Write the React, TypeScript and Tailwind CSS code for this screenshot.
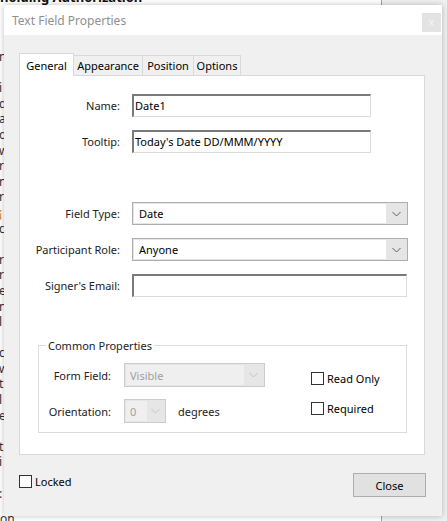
import React from 'react';

const font = "font-['Noto_Sans',sans-serif]";

function Chevron({ color = '#606060' }: { color?: string }) {
  return (
    <svg width="9" height="6" viewBox="0 0 9 6" fill="none">
      <path d="M0.5 1 L4.5 5 L8.5 1" stroke={color} strokeWidth="1" />
    </svg>
  );
}

function TextInput({ value, width }: { value?: string; width: string }) {
  return (
    <div
      className={`${width} h-[23px] bg-white border-t-2 border-l-2 border-t-[#7a7a7a] border-l-[#7a7a7a] border-r border-b border-r-[#dcdcdc] border-b-[#dcdcdc] flex items-center pl-[1px] pt-[1px] text-black`}
    >
      {value}
    </div>
  );
}

function Select({ value }: { value: string }) {
  return (
    <div className="w-[276px] h-[23px] border border-[#adadad] bg-[#e5e5e5] flex p-[1px]">
      <div className="flex-1 bg-white flex items-center pl-[5px] pt-[2px] text-black">{value}</div>
      <div className="w-[20px] flex items-center justify-center">
        <Chevron />
      </div>
    </div>
  );
}

function Checkbox({ label }: { label: string }) {
  return (
    <div className="flex items-center gap-[3px] h-[15px]">
      <div className="w-[13px] h-[13px] border border-[#333333] bg-white" />
      <span className="text-black pt-[2px]">{label}</span>
    </div>
  );
}

const pageLetters = [
  'i', 'd', 'a', 'o', 'w', 'r', 'n', 'r', '¡', 'c', '', 'r', 'r', 'e', 'n', 'l', '', 'c', 'w', 't', 'l', 'e', '', 't', 'i', '', ':',
];

export default function App() {
  return (
    <div className={`relative w-[447px] h-[521px] overflow-hidden bg-white ${font}`}>
      {/* page behind the dialog */}
      <div className="absolute left-0 top-[-12px] text-[13px] font-bold text-[#111] whitespace-nowrap">
        holding Authorization
      </div>
      <div className="absolute left-[-1px] top-[49px] text-[12px] text-[#333] leading-[15.6px] flex flex-col">
        <span>n</span>
        <span>&nbsp;</span>
        {pageLetters.map((l, i) => (
          <span key={i} className={l === '¡' ? 'text-[#d08020]' : ''}>
            {l || '\u00a0'}
          </span>
        ))}
      </div>
      <div className="absolute left-0 top-[510px] text-[12px] text-[#333]">on</div>
      <div className="absolute left-[381px] top-0 w-[66px] h-full bg-[#f0f0f0] border-l border-[#a0a0a0]" />

      {/* dialog window */}
      <div className="absolute left-[4px] top-[5px] w-[438px] h-[511px] bg-[#f0f0f0] shadow-[0_0_6px_rgba(0,0,0,0.25)] flex flex-col text-[11px]">
        <div className="h-[30px] bg-white flex justify-between pl-[8px] pr-[1px]">
          <span className="mt-[7px] text-[12px] text-[#8f8f8f]">Text Field Properties</span>
          <div className="mt-[8px] w-[19px] h-[19px] bg-[#e3e3e3] flex items-center justify-center text-[10px] text-[#f4f4f4]">
            x
          </div>
        </div>

        <div className="flex mt-[18px] ml-[15px] items-end h-[22px]">
          <div className="relative z-10 w-[55px] h-[23px] -mb-px bg-white border-x border-t border-[#d9d9d9] flex justify-center items-start pt-[4px] text-black">
            General
          </div>
          <div className="h-[20px] w-[70px] -ml-px border-x border-t border-[#d9d9d9] flex items-center justify-center pt-[2px] text-black">
            Appearance
          </div>
          <div className="h-[20px] w-[52px] -ml-px border-x border-t border-[#d9d9d9] flex items-center justify-center pt-[2px] text-black">
            Position
          </div>
          <div className="h-[20px] w-[48px] -ml-px border-x border-t border-[#d9d9d9] flex items-center justify-center pt-[2px] text-black">
            Options
          </div>
        </div>

        <div className="ml-[15px] w-[406px] h-[380px] bg-white border border-[#d9d9d9] flex flex-col">
          <div className="flex items-center mt-[18px]">
            <span className="w-[100px] text-right pt-[2px] text-[#222]">Name:</span>
            <div className="ml-[12px]">
              <TextInput value="Date1" width="w-[239px]" />
            </div>
          </div>
          <div className="flex items-center mt-[13px]">
            <span className="w-[100px] text-right pt-[2px] text-[#222]">Tooltip:</span>
            <div className="ml-[12px]">
              <TextInput value="Today's Date DD/MMM/YYYY" width="w-[239px]" />
            </div>
          </div>
          <div className="flex items-center mt-[49px]">
            <span className="w-[100px] text-right pt-[2px] text-[#222]">Field Type:</span>
            <div className="ml-[12px]">
              <Select value="Date" />
            </div>
          </div>
          <div className="flex items-center mt-[13px]">
            <span className="w-[100px] text-right pt-[2px] text-[#222]">Participant Role:</span>
            <div className="ml-[12px]">
              <Select value="Anyone" />
            </div>
          </div>
          <div className="flex items-center mt-[13px]">
            <span className="w-[100px] text-right pt-[2px] text-[#222]">Signer's Email:</span>
            <div className="ml-[12px]">
              <TextInput width="w-[275px]" />
            </div>
          </div>

          <div className="relative ml-[18px] mt-[48px] w-[369px] h-[88px] border border-[#dcdcdc] flex">
            <span className="absolute left-[7px] top-[-8px] bg-white px-[2px] leading-[16px] text-[#222]">
              Common Properties
            </span>
            <div className="flex flex-col mt-[17px] gap-[12px]">
              <div className="flex items-center">
                <span className="w-[72px] text-right pt-[2px] text-[#222]">Form Field:</span>
                <div className="ml-[13px] w-[141px] h-[24px] border border-[#cccccc] bg-[#e6e6e6] flex p-[1px]">
                  <div className="flex-1 bg-[#efefef] flex items-center pl-[4px] pt-[2px] text-[#a0a0a0]">Visible</div>
                  <div className="w-[19px] flex items-center justify-center">
                    <Chevron color="#c4c4c4" />
                  </div>
                </div>
              </div>
              <div className="flex items-center">
                <span className="w-[72px] text-right pt-[2px] text-[#222]">Orientation:</span>
                <div className="ml-[13px] w-[42px] h-[24px] border border-[#cccccc] bg-[#e6e6e6] flex p-[1px]">
                  <div className="w-[21px] bg-[#efefef] flex items-center pl-[4px] pt-[2px] text-[#a0a0a0]">0</div>
                  <div className="flex-1 flex items-center justify-center">
                    <Chevron color="#c4c4c4" />
                  </div>
                </div>
                <span className="ml-[12px] pt-[2px] text-[#222]">degrees</span>
              </div>
            </div>
            <div className="flex flex-col ml-[46px] mt-[25px] gap-[15px]">
              <Checkbox label="Read Only" />
              <Checkbox label="Required" />
            </div>
          </div>
        </div>

        <div className="flex justify-between items-start mt-[18px] pl-[15px] pr-[16px]">
          <div className="mt-[1px]">
            <Checkbox label="Locked" />
          </div>
          <div className="w-[73px] h-[24px] bg-[#e1e1e1] border border-[#adadad] flex items-center justify-center pt-[2px] text-black">
            Close
          </div>
        </div>
      </div>
    </div>
  );
}
